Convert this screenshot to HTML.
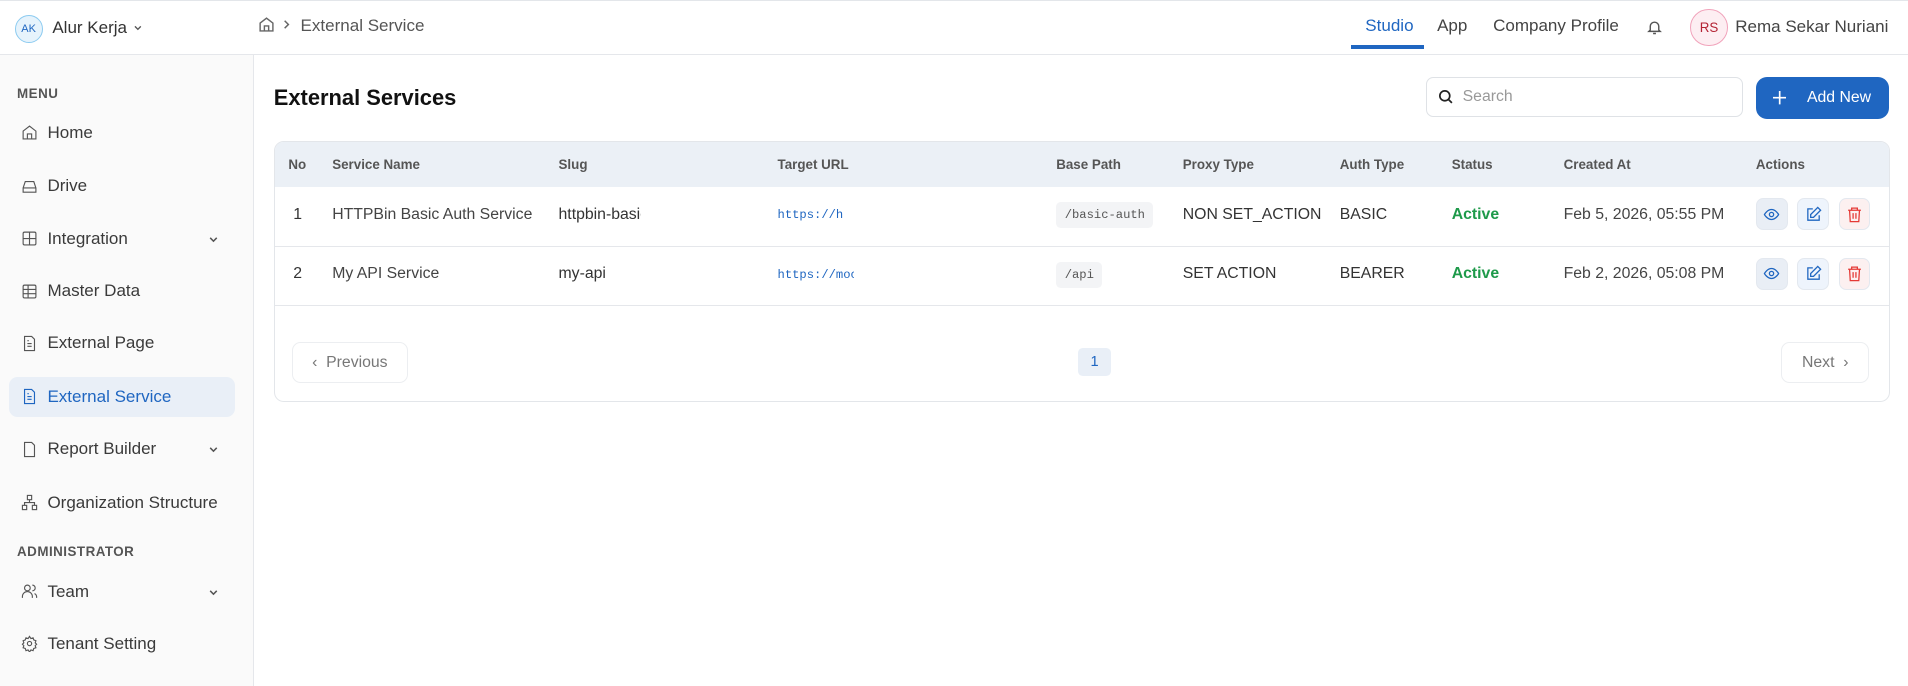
<!DOCTYPE html>
<html><head><meta charset="utf-8"><style>
*{box-sizing:border-box;margin:0;padding:0}
html,body{width:1908px;height:686px;overflow:hidden;background:#fff}
#r{zoom:1.21684;width:1568px;height:564px;position:relative;font-family:"Liberation Sans",sans-serif;color:#333;font-size:14px}
.a{position:absolute;white-space:nowrap}
.hdr{left:0;top:0;width:1568px;height:45px;border-top:1px solid #e3e6ea;border-bottom:1px solid #e5e7eb;background:#fff}
.side{left:0;top:45px;width:209px;height:519px;background:#fafafa;border-right:1px solid #e5e7eb}
.mi{left:17px;display:flex;align-items:center;gap:8px;color:#3a3a3a;font-size:14px}
.mi svg{width:14px;height:14px;fill:none;stroke:#555;stroke-width:1.6}
.sec{left:14px;font-size:11px;font-weight:bold;color:#555;letter-spacing:.4px}
.chev{left:171px}
.th{top:129px;font-size:11px;font-weight:bold;color:#555}
.td{font-size:13px;color:#333}
.mono{font-family:"Liberation Mono",monospace;font-size:10px;color:#1f66c1}
.bp{font-family:"Liberation Mono",monospace;font-size:10px;color:#555;background:#f3f4f6;border-radius:4px;padding:5px 7px}
.act{width:26px;height:26px;border-radius:6px;border:1px solid #e3e8ef;display:flex;align-items:center;justify-content:center}
.act svg{width:14px;height:14px;fill:none;stroke-width:1.8}
</style></head><body><div id="r">
<div class="a hdr"></div>
<div class="a" style="left:12px;top:12px;width:23px;height:23px;border-radius:50%;background:#e6f3fc;border:1px solid #8ccbf0;font-size:9px;color:#1f66c1;display:flex;align-items:center;justify-content:center">AK</div>
<div class="a" style="left:43px;top:15px;font-size:14px;color:#333">Alur Kerja</div>
<svg class="a" style="left:109px;top:19px" width="8" height="8" viewBox="0 0 10 10" fill="none" stroke="#555" stroke-width="1.4"><path d="M2 3.5l3 3 3-3"/></svg>
<svg class="a" style="left:212px;top:13px" width="14" height="14" viewBox="0 0 24 24" fill="none" stroke="#666" stroke-width="2"><path d="M3 10l9-7 9 7v11H3z M9 21v-7h6v7"/></svg>
<svg class="a" style="left:232px;top:16px" width="7" height="9" viewBox="0 0 8 10" fill="none" stroke="#666" stroke-width="1.4"><path d="M2.5 1.5l3.5 3.5-3.5 3.5"/></svg>
<div class="a" style="left:247px;top:13px;font-size:14px;color:#555">External Service</div>
<div class="a" style="left:1122px;top:13px;font-size:14px;color:#1f66c1">Studio</div>
<div class="a" style="left:1110px;top:37px;width:60px;height:3px;background:#1f66c1"></div>
<div class="a" style="left:1181px;top:13px;font-size:14px;color:#444">App</div>
<div class="a" style="left:1227px;top:13px;font-size:14px;color:#444">Company Profile</div>
<svg class="a" style="left:1353px;top:15px" width="14" height="15" viewBox="0 0 24 24" fill="none" stroke="#555" stroke-width="2"><path d="M6 16V11a6 6 0 0112 0v5l2 2H4z M10 21h4"/></svg>
<div class="a" style="left:1389px;top:7px;width:31px;height:31px;border-radius:50%;background:#fdeef2;border:1px solid #f1a3bb;font-size:11px;color:#b42334;display:flex;align-items:center;justify-content:center">RS</div>
<div class="a" style="left:1426px;top:14px;font-size:14px;color:#444">Rema Sekar Nuriani</div>

<div class="a side"></div>
<div class="a sec" style="top:71px">MENU</div>
<div class="a" style="left:7px;top:310px;width:186px;height:33px;background:#e9eff7;border-radius:7px"></div>
<div class="a mi" style="top:101px"><svg viewBox="0 0 24 24"><path d="M3 10l9-7 9 7v11H3z M9 21v-7h6v7"/></svg>Home</div>
<div class="a mi" style="top:145px"><svg viewBox="0 0 24 24"><path d="M3 14l3-9h12l3 9v6H3z M3 14h18"/></svg>Drive</div>
<div class="a mi" style="top:188px"><svg viewBox="0 0 24 24"><rect x="3" y="3" width="18" height="18" rx="2"/><path d="M12 3v18M3 12h18"/></svg>Integration</div>
<svg class="a chev" style="top:192px" width="9" height="9" viewBox="0 0 10 10" fill="none" stroke="#555" stroke-width="1.4"><path d="M2 3.5l3 3 3-3"/></svg>
<div class="a mi" style="top:231px"><svg viewBox="0 0 24 24"><rect x="3" y="3" width="18" height="18" rx="2"/><path d="M3 9h18M3 15h18M10 3v18"/></svg>Master Data</div>
<div class="a mi" style="top:274px"><svg viewBox="0 0 24 24"><path d="M5 2h10l4 4v16H5z M9 12h6M9 16h6M9 8h2"/></svg>External Page</div>
<div class="a mi" style="top:318px;color:#1f66c1"><svg viewBox="0 0 24 24" style="stroke:#1f66c1"><path d="M5 2h10l4 4v16H5z M9 12h6M9 16h6M9 8h2"/></svg>External Service</div>
<div class="a mi" style="top:361px"><svg viewBox="0 0 24 24"><path d="M5 2h10l4 4v16H5z"/></svg>Report Builder</div>
<svg class="a chev" style="top:365px" width="9" height="9" viewBox="0 0 10 10" fill="none" stroke="#555" stroke-width="1.4"><path d="M2 3.5l3 3 3-3"/></svg>
<div class="a mi" style="top:405px"><svg viewBox="0 0 24 24"><rect x="9" y="2" width="6" height="6"/><rect x="2" y="16" width="6" height="6"/><rect x="16" y="16" width="6" height="6"/><path d="M12 8v4M5 16v-4h14v4"/></svg>Organization Structure</div>
<div class="a sec" style="top:447px">ADMINISTRATOR</div>
<div class="a mi" style="top:478px"><svg viewBox="0 0 24 24"><circle cx="9" cy="7" r="4"/><path d="M2 21v-2a5 5 0 0114 0v2M16 3a4 4 0 010 8M22 21v-2a5 5 0 00-3-4"/></svg>Team</div>
<svg class="a chev" style="top:482px" width="9" height="9" viewBox="0 0 10 10" fill="none" stroke="#555" stroke-width="1.4"><path d="M2 3.5l3 3 3-3"/></svg>
<div class="a mi" style="top:521px"><svg viewBox="0 0 24 24"><circle cx="12" cy="12" r="3"/><path d="M12 2l2 3 3-1 1 3 3 1-1 3 2 2-2 2 1 3-3 1-1 3-3-1-2 3-2-3-3 1-1-3-3-1 1-3-2-2 2-2-1-3 3-1 1-3 3 1z"/></svg>Tenant Setting</div>

<div class="a" style="left:225px;top:70px;font-size:18px;font-weight:bold;color:#111">External Services</div>
<div class="a" style="left:1172px;top:63px;width:260px;height:33px;border:1px solid #dfe2e6;border-radius:6px"></div>
<svg class="a" style="left:1181px;top:72px" width="14" height="14" viewBox="0 0 24 24" fill="none" stroke="#222" stroke-width="2.4"><circle cx="11" cy="11" r="7"/><path d="M16 16l5 5"/></svg>
<div class="a" style="left:1202px;top:72px;font-size:13px;color:#999">Search</div>
<div class="a" style="left:1443px;top:63px;width:109px;height:35px;background:#1f66c1;border-radius:9px;color:#fff;font-size:13px"><svg class="a" style="left:14px;top:12px" width="11" height="11" viewBox="0 0 12 12" stroke="#fff" stroke-width="1.5"><path d="M6 0v12M0 6h12"/></svg><span class="a" style="left:42px;top:10px">Add New</span></div>

<div class="a" style="left:225px;top:116px;width:1328px;height:214px;border:1px solid #e3e6ea;border-radius:8px;overflow:hidden">
 <div style="height:37px;background:#ebf0f6"></div>
 <div style="position:absolute;top:85px;left:0;width:100%;border-top:1px solid #e5e7eb"></div>
 <div style="position:absolute;top:134px;left:0;width:100%;border-top:1px solid #e5e7eb"></div>
</div>
<div class="a th" style="left:237px">No</div><div class="a th" style="left:273px">Service Name</div><div class="a th" style="left:459px">Slug</div><div class="a th" style="left:639px">Target URL</div><div class="a th" style="left:868px">Base Path</div><div class="a th" style="left:972px">Proxy Type</div><div class="a th" style="left:1101px">Auth Type</div><div class="a th" style="left:1193px">Status</div><div class="a th" style="left:1285px">Created At</div><div class="a th" style="left:1443px">Actions</div>

<div class="a td" style="left:241px;top:169px">1</div>
<div class="a td" style="left:273px;top:169px;color:#444">HTTPBin Basic Auth Service</div>
<div class="a td" style="left:459px;top:169px;width:68px;overflow:hidden">httpbin-basic</div>
<div class="a mono" style="left:639px;top:171px;width:55px;overflow:hidden">https://httpbin</div>
<div class="a bp" style="left:868px;top:166px">/basic-auth</div>
<div class="a td" style="left:972px;top:169px">NON SET_ACTION</div>
<div class="a td" style="left:1101px;top:169px">BASIC</div>
<div class="a td" style="left:1193px;top:169px;color:#1e9a4a;font-weight:bold">Active</div>
<div class="a td" style="left:1285px;top:169px;color:#444">Feb 5, 2026, 05:55 PM</div>

<div class="a td" style="left:241px;top:218px">2</div>
<div class="a td" style="left:273px;top:218px;color:#444">My API Service</div>
<div class="a td" style="left:459px;top:218px">my-api</div>
<div class="a mono" style="left:639px;top:220px;width:63px;overflow:hidden">https://mock</div>
<div class="a bp" style="left:868px;top:215px">/api</div>
<div class="a td" style="left:972px;top:218px">SET ACTION</div>
<div class="a td" style="left:1101px;top:218px">BEARER</div>
<div class="a td" style="left:1193px;top:218px;color:#1e9a4a;font-weight:bold">Active</div>
<div class="a td" style="left:1285px;top:218px;color:#444">Feb 2, 2026, 05:08 PM</div>

<div class="a" style="left:1443px;top:163px;display:flex;gap:8px">
<div class="act" style="background:#e9eef5"><svg viewBox="0 0 24 24" stroke="#1f66c1"><path d="M2 12s4-7 10-7 10 7 10 7-4 7-10 7S2 12 2 12z"/><circle cx="12" cy="12" r="3"/></svg></div>
<div class="act" style="background:#eef4fc"><svg viewBox="0 0 24 24" stroke="#1f66c1"><path d="M11 4H4v16h16v-7M18 2l4 4-10 10H8v-4z"/></svg></div>
<div class="act" style="background:#fcf0f0"><svg viewBox="0 0 24 24" stroke="#e53935"><path d="M3 6h18M8 6V3h8v3M5 6l1 16h12l1-16M10 10v8M14 10v8"/></svg></div></div>
<div class="a" style="left:1443px;top:212px;display:flex;gap:8px">
<div class="act" style="background:#e9eef5"><svg viewBox="0 0 24 24" stroke="#1f66c1"><path d="M2 12s4-7 10-7 10 7 10 7-4 7-10 7S2 12 2 12z"/><circle cx="12" cy="12" r="3"/></svg></div>
<div class="act" style="background:#eef4fc"><svg viewBox="0 0 24 24" stroke="#1f66c1"><path d="M11 4H4v16h16v-7M18 2l4 4-10 10H8v-4z"/></svg></div>
<div class="act" style="background:#fcf0f0"><svg viewBox="0 0 24 24" stroke="#e53935"><path d="M3 6h18M8 6V3h8v3M5 6l1 16h12l1-16M10 10v8M14 10v8"/></svg></div></div>

<div class="a" style="left:240px;top:281px;width:95px;height:34px;border:1px solid #eceef1;border-radius:7px;font-size:13px;color:#777;display:flex;align-items:center;justify-content:center">&#8249;&nbsp;&nbsp;Previous</div>
<div class="a" style="left:886px;top:286px;width:27px;height:23px;background:#e9eff7;border-radius:4px;font-size:12px;color:#1f66c1;display:flex;align-items:center;justify-content:center">1</div>
<div class="a" style="left:1464px;top:281px;width:72px;height:34px;border:1px solid #eceef1;border-radius:7px;font-size:13px;color:#777;display:flex;align-items:center;justify-content:center">Next&nbsp;&nbsp;&#8250;</div>
</div></body></html>
